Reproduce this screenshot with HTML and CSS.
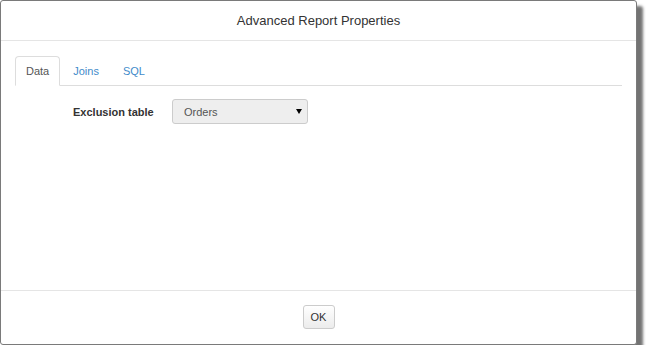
FILE: index.html
```html
<!DOCTYPE HTML>
<html lang="en">
  <head>
    <title>Advanced Report Properties</title>
    <link rel="stylesheet" href="styles.css">
  </head>
  <body>
    <div class="Dialog">
      <div class="Header">
        <h4 class="Title">Advanced Report Properties</h4>
      </div>
      <div class="Body">
        <ul class="Tabs">
          <li class="Tab Active"><a href="#">Data</a></li>
          <li class="Tab"><a href="#">Joins</a></li>
          <li class="Tab"><a href="#">SQL</a></li>
        </ul>
        <div class="Field">
          <label class="Caption" for="ExclTable">Exclusion table</label>
          <span class="SelectWrap">
            <select id="ExclTable" class="Select">
              <option>Orders</option>
            </select>
          </span>
        </div>
      </div>
      <div class="Footer">
        <button class="Btn">OK</button>
      </div>
    </div>
  </body>
</html>
```

FILE: styles.css
```css
* {
  margin: 0;
  padding: 0;
  box-sizing: border-box;
}

body {
  background: #fff;
  font-family: "Liberation Sans", Arial, sans-serif;
  font-size: 11px;
  color: #333;
}

.Dialog {
  display: flex;
  flex-direction: column;
  width: 637px;
  height: 345px;
  background: #fff;
  border: 1px solid #7a7a7a;
  border-radius: 3px;
  box-shadow: 6px 6px 3px rgba(0, 0, 0, 0.55);
}

.Header {
  height: 40px;
  border-bottom: 1px solid #e5e5e5;
  display: flex;
  align-items: center;
  justify-content: center;
}

.Title {
  font-size: 13px;
  font-weight: normal;
  color: #333;
}

.Body {
  flex: 1;
  padding: 15px 14px 0 14px;
}

.Tabs {
  list-style: none;
  display: flex;
  border-bottom: 1px solid #ddd;
  height: 30px;
}

.Tab {
  margin-right: 2px;
}

.Tab a {
  display: block;
  height: 30px;
  padding: 6px 10px;
  line-height: 17px;
  border: 1px solid transparent;
  border-radius: 4px 4px 0 0;
  color: #428bca;
  text-decoration: none;
}

.Tab.Active a {
  color: #555;
  border-color: #ddd #ddd #fff;
  background: #fff;
}

.Field {
  display: flex;
  align-items: center;
  margin-top: 13px;
  padding-left: 58px;
}

.Caption {
  font-weight: bold;
  width: 99px;
  color: #333;
}

.SelectWrap {
  position: relative;
  display: inline-block;
}

.SelectWrap::after {
  content: "";
  position: absolute;
  right: 6px;
  top: 10px;
  border-left: 3px solid transparent;
  border-right: 3px solid transparent;
  border-top: 5px solid #000;
}

.Select {
  appearance: none;
  -webkit-appearance: none;
  width: 136px;
  height: 25px;
  padding: 0 11px;
  font: inherit;
  color: #555;
  background: #eee;
  border: 1px solid #ccc;
  border-radius: 3px;
}

.Footer {
  border-top: 1px solid #e5e5e5;
  height: 54px;
  display: flex;
  justify-content: center;
  padding-top: 14px;
}

.Btn {
  width: 32px;
  height: 24px;
  font: inherit;
  color: #333;
  background: linear-gradient(#fff, #ececec);
  border: 1px solid #ccc;
  border-radius: 3px;
}
```
